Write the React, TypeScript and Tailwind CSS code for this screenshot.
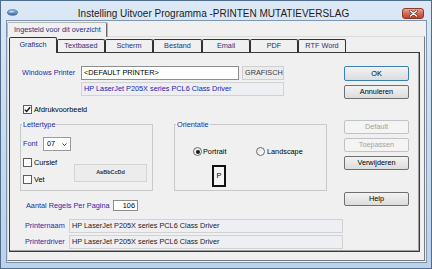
import { clsx } from 'clsx'

const tabs = ['Grafisch', 'Textbased', 'Scherm', 'Bestand', 'Email', 'PDF', 'RTF Word']

function Checkbox({ checked }: { checked?: boolean }) {
  return (
    <span className="flex h-[9px] w-[9px] shrink-0 items-center justify-center border border-[#5e5e5e] bg-white">
      {checked && (
        <svg viewBox="0 0 8 8" className="h-[7px] w-[7px]">
          <path d="M1 4.2 L3 6.2 L7 1.4" fill="none" stroke="#111" strokeWidth="1.6" />
        </svg>
      )}
    </span>
  )
}

function Radio({ checked }: { checked?: boolean }) {
  return (
    <span className="flex h-[9px] w-[9px] shrink-0 items-center justify-center rounded-full border border-[#6e6e6e] bg-gradient-to-br from-[#e2e2e2] to-white">
      {checked && <span className="h-[4px] w-[4px] rounded-full bg-[#1a1a1a]" />}
    </span>
  )
}

function Button({
  label,
  disabled,
  focus,
  className,
}: {
  label: string
  disabled?: boolean
  focus?: boolean
  className?: string
}) {
  return (
    <div
      className={clsx(
        'flex w-[65px] items-center justify-center rounded-[2px] border',
        disabled
          ? 'border-[#bfc3c6] bg-[#f4f4f4] text-[#a3a3a3]'
          : 'bg-gradient-to-b from-[#f3f3f3] to-[#dcdcdc]',
        !disabled && (focus ? 'border-[#3c7fb1]' : 'border-[#707070]'),
        className
      )}
    >
      {label}
    </div>
  )
}

export default function App() {
  return (
    <div className="flex h-[269px] w-[432px] flex-col overflow-hidden border border-[#4f6d8c] bg-gradient-to-b from-[#dce8f5] via-[#c9dbee] to-[#bcd2ea] font-['Liberation_Sans',Arial,sans-serif] text-[7.3px] leading-none text-black">
      {/* Title bar */}
      <div className="flex h-[19px] shrink-0 items-start">
        <svg viewBox="0 0 11 7" className="ml-[6px] mt-[8px] h-[7px] w-[11px]">
          <defs>
            <linearGradient id="ic" x1="0" y1="0" x2="0" y2="1">
              <stop offset="0" stopColor="#9cbde0" />
              <stop offset="1" stopColor="#3d6ba3" />
            </linearGradient>
          </defs>
          <ellipse cx="5.5" cy="3.5" rx="5" ry="2.8" fill="url(#ic)" stroke="#2f5686" strokeWidth="0.6" />
          <ellipse cx="4.5" cy="2.6" rx="2.6" ry="0.9" fill="#e6f0fa" opacity="0.7" />
        </svg>
        <span className="mt-[8px] flex-1 pl-[7px] text-center text-[10px] text-[#1b1b1b]">
          Instelling Uitvoer Programma -PRINTEN MUTATIEVERSLAG
        </span>
        <span className="mr-[7px] mt-[7px] flex h-[11px] w-[22px] items-center justify-center rounded-[3px] border border-[#8a3a2a] bg-gradient-to-b from-[#e9a595] via-[#d26a52] to-[#c2412a]">
          <svg viewBox="0 0 9 7" className="h-[7px] w-[9px]">
            <path d="M1.5 1 L7.5 6 M7.5 1 L1.5 6" stroke="#5a2418" strokeWidth="2.6" strokeLinecap="round" />
            <path d="M1.5 1 L7.5 6 M7.5 1 L1.5 6" stroke="#ffffff" strokeWidth="1.5" strokeLinecap="round" />
          </svg>
        </span>
      </div>

      {/* Client area */}
      <div className="ml-[5px] flex h-[243px] w-[421px] flex-col border border-[#7d95ae] bg-[#f0f0f0]">
        {/* Outer tab */}
        <div className="flex h-[15px] shrink-0 items-end">
          <div className="relative z-10 -mb-px flex h-[15px] w-[101px] items-center justify-center rounded-t-[2px] border border-b-0 border-[#b4b4b4] bg-[#f0f0f0] text-[#26307c] shadow-[inset_-1px_0_0_#6a6a6a]">
            Ingesteld voor dit overzicht
          </div>
        </div>

        {/* Outer panel */}
        <div className="flex h-[225px] w-[418px] flex-col border border-[#dadada] border-b-[#7a7a7a] border-r-[#7a7a7a]">
          {/* Inner tabs */}
          <div className="flex h-[15px] shrink-0 items-end pl-[1px]">
            {tabs.map((t, i) => (
              <div
                key={t}
                className={clsx(
                  'flex items-center justify-center rounded-t-[2px] border border-b-0 border-[#333333] bg-[#f0f0f0] text-[#26307c]',
                  i === 3 ? 'w-[49px]' : 'w-[48px]',
                  i === 0 ? 'relative z-10 -mb-px h-[16px] pb-[1px]' : 'h-[13px]'
                )}
              >
                {t}
              </div>
            ))}
          </div>

          {/* Inner panel */}
          <div className="ml-[1px] flex h-[200px] w-[411px] border border-[#3a3a3a] bg-[#f0f0f0] shadow-[inset_-1px_-1px_0_#a0a0a0]">
            {/* Left column */}
            <div className="flex w-[333px] flex-col pl-[10px]">
              <div className="mt-[13px] flex h-[14px]">
                <span className="flex w-[61px] items-center pl-[2px] text-[#2828a8]">Windows Printer</span>
                <span className="flex w-[158px] items-center border border-[#8e8e8e] bg-white pl-[2px]">
                  &lt;DEFAULT PRINTER&gt;
                </span>
                <span className="ml-[3px] flex w-[42px] items-center border border-[#cfcfcf] bg-[#ececec] pl-[2px] text-[#3a3a3a]">
                  GRAFISCH
                </span>
              </div>
              <div className="ml-[61px] mt-[2px] flex h-[14px] w-[203px] items-center border border-[#d2d2d2] bg-[#eeeff2] pl-[2px] text-[#2222b8]">
                HP LaserJet P205X series PCL6 Class Driver
              </div>

              <div className="mt-[9px] flex h-[9px] items-center pl-[3px]">
                <Checkbox checked />
                <span className="ml-[2px]">Afdrukvoorbeeld</span>
              </div>

              <div className="mt-[6px] flex">
                <fieldset className="w-[133px] border border-[#c9c9c9] pb-[6px]">
                  <legend className="ml-[1px] px-[1px] leading-[9px] text-[#2828a8]">Lettertype</legend>
                  <div className="mt-[8px] flex h-[14px] pl-[2px]">
                    <span className="flex w-[20px] items-center text-[#2828a8]">Font</span>
                    <span className="flex w-[28px] items-center justify-between border border-[#9a9a9a] bg-white pl-[3px] pr-[3px]">
                      07
                      <svg viewBox="0 0 5 3" className="h-[3px] w-[5px]">
                        <path d="M0.5 0.5 L2.5 2.5 L4.5 0.5" fill="none" stroke="#222" strokeWidth="0.9" />
                      </svg>
                    </span>
                  </div>
                  <div className="mt-[7px] flex">
                    <div className="flex w-[53px] flex-col pl-[2px]">
                      <div className="flex h-[9px] items-center">
                        <Checkbox />
                        <span className="ml-[2px]">Cursief</span>
                      </div>
                      <div className="mt-[8px] flex h-[9px] items-center">
                        <Checkbox />
                        <span className="ml-[2px]">Vet</span>
                      </div>
                    </div>
                    <div className="mt-[6px] flex h-[18px] w-[73px] items-center justify-center border border-[#d4d4d4] bg-[#ececec] text-[5.5px] font-bold text-[#333]">
                      AaBbCcDd
                    </div>
                  </div>
                </fieldset>

                <fieldset className="ml-[21px] w-[153px] border border-[#c9c9c9]">
                  <legend className="ml-[1px] px-[1px] leading-[9px] text-[#2828a8]">Orientatie</legend>
                  <div className="mt-[18px] flex h-[9px] items-center pl-[18px]">
                    <div className="flex w-[63px] items-center">
                      <Radio checked />
                      <span className="ml-[1px]">Portrait</span>
                    </div>
                    <Radio />
                    <span className="ml-[2px]">Landscape</span>
                  </div>
                  <div className="ml-[37px] mt-[9px] flex h-[22px] w-[14px] items-center justify-center border-2 border-[#111] bg-[#f4f4f4]">
                    P
                  </div>
                </fieldset>
              </div>

              <div className="mt-[9px] flex h-[11px]">
                <span className="flex w-[93px] items-center pl-[6px] text-[#2828a8]">Aantal Regels Per Pagina</span>
                <span className="flex w-[25px] items-center justify-end border border-[#8e8e8e] bg-white pr-[2px]">106</span>
              </div>

              <div className="mt-[8px] flex h-[14px]">
                <span className="flex w-[49px] items-center pl-[5px] text-[#2828a8]">Printernaam</span>
                <span className="flex w-[274px] items-center border border-[#d2d2d2] bg-[#eeeff2] pl-[2px] text-[#222]">
                  HP LaserJet P205X series PCL6 Class Driver
                </span>
              </div>
              <div className="mt-[2px] flex h-[14px]">
                <span className="flex w-[49px] items-center pl-[5px] text-[#2828a8]">Printerdriver</span>
                <span className="flex w-[274px] items-center border border-[#d2d2d2] bg-[#eeeff2] pl-[2px] text-[#222]">
                  HP LaserJet P205X series PCL6 Class Driver
                </span>
              </div>
            </div>

            {/* Right column: buttons */}
            <div className="ml-[1px] flex w-[65px] flex-col">
              <Button label="OK" focus className="mt-[13px] h-[15px]" />
              <Button label="Annuleren" className="mt-[4px] h-[14px]" />
              <Button label="Default" disabled className="mt-[21px] h-[14px]" />
              <Button label="Toepassen" disabled className="mt-[4px] h-[14px]" />
              <Button label="Verwijderen" className="mt-[4px] h-[14px]" />
              <Button label="Help" className="mt-[22px] h-[14px]" />
            </div>
          </div>
        </div>
      </div>
    </div>
  )
}
